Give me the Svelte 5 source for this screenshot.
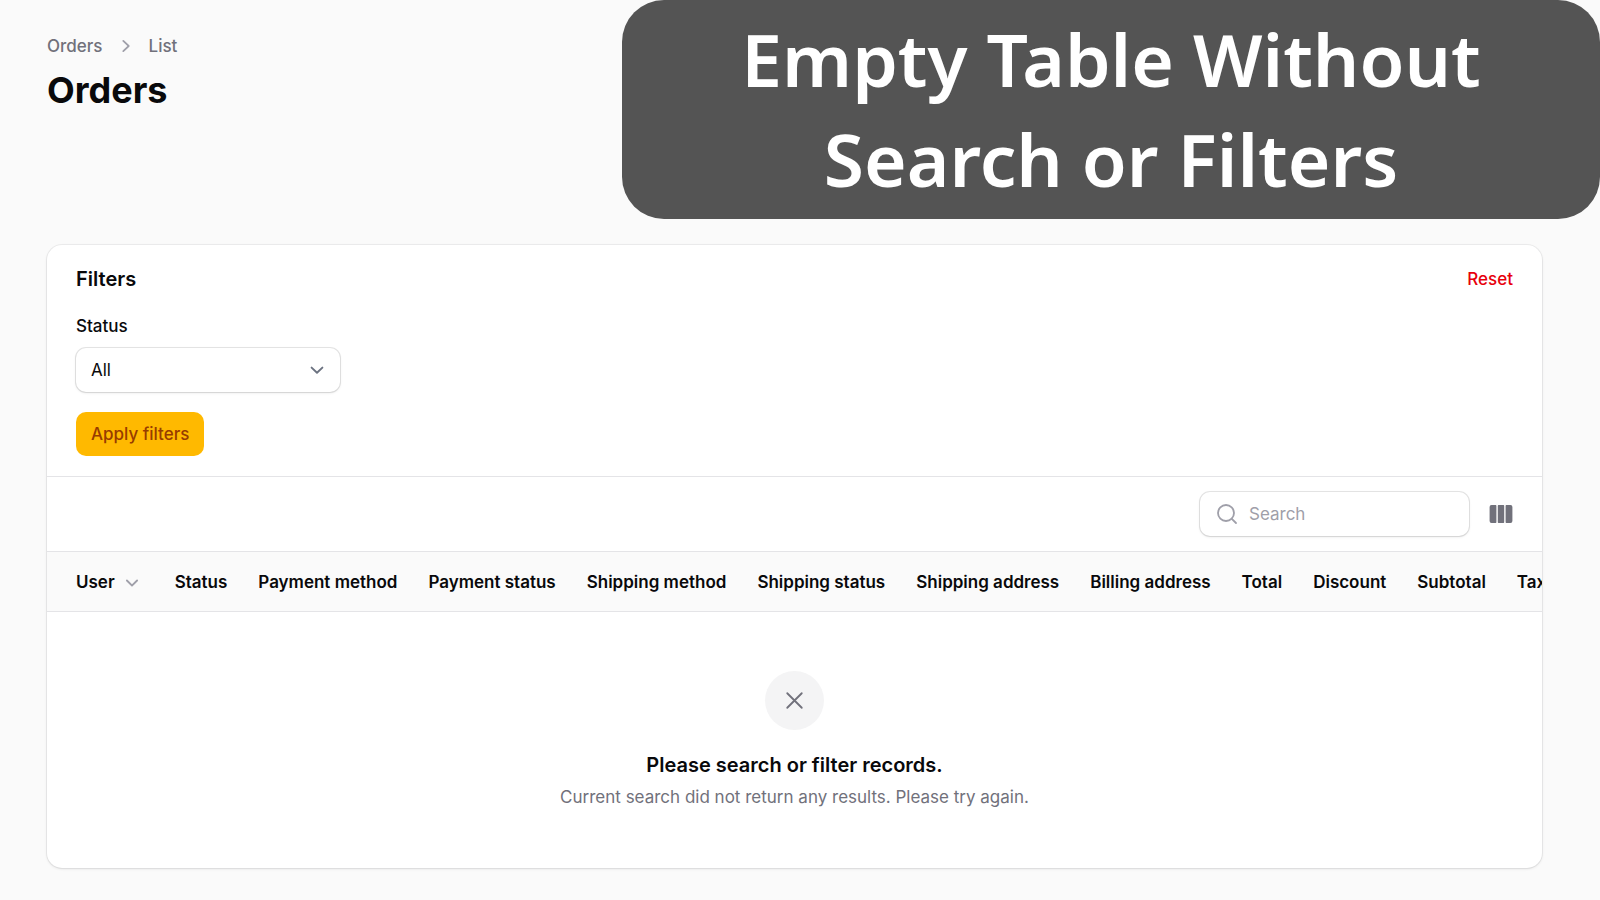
<script>
  let status = 'all';
  let search = '';

  const columns = [
    'User',
    'Status',
    'Payment method',
    'Payment status',
    'Shipping method',
    'Shipping status',
    'Shipping address',
    'Billing address',
    'Total',
    'Discount',
    'Subtotal',
    'Tax',
  ];

  function resetFilters() {
    status = 'all';
  }
</script>

<div class="page">
  <header class="page-header">
    <nav class="breadcrumbs" aria-label="Breadcrumb">
      <a href="#orders">Orders</a>
      <svg viewBox="0 0 20 20" fill="currentColor" aria-hidden="true">
        <path d="M7.21 14.77a.75.75 0 0 1 .02-1.06L11.168 10 7.23 6.29a.75.75 0 1 1 1.04-1.08l4.5 4.25a.75.75 0 0 1 0 1.08l-4.5 4.25a.75.75 0 0 1-1.06-.02Z" />
      </svg>
      <a href="#list">List</a>
    </nav>
    <h1>Orders</h1>
  </header>

  <div class="banner">Empty Table Without Search or Filters</div>

  <main class="card">
    <form class="filters" on:submit|preventDefault>
      <div class="filters-header">
        <h2>Filters</h2>
        <button type="button" class="reset" on:click={resetFilters}>Reset</button>
      </div>
      <div class="field">
        <label for="status">Status</label>
        <div class="select-wrap">
          <select id="status" bind:value={status}>
            <option value="all">All</option>
            <option value="new">New</option>
            <option value="shipped">Shipped</option>
          </select>
          <svg viewBox="0 0 20 20" fill="none" stroke="currentColor" stroke-width="1.6" stroke-linecap="round" stroke-linejoin="round" aria-hidden="true">
            <path d="m5.5 8 4.5 4.3L14.5 8" />
          </svg>
        </div>
      </div>
      <button type="submit" class="apply">Apply filters</button>
    </form>

    <div class="toolbar">
      <label class="search">
        <svg viewBox="0 0 24 24" fill="none" stroke="currentColor" stroke-width="1.8" stroke-linecap="round" aria-hidden="true">
          <circle cx="11" cy="11" r="8" />
          <path d="m16.8 16.8 4.2 4.2" />
        </svg>
        <input type="search" placeholder="Search" aria-label="Search" bind:value={search} />
      </label>
      <button type="button" class="columns" aria-label="Toggle columns">
        <svg viewBox="0 0 24 24" fill="currentColor" aria-hidden="true">
          <path d="M2.5 3h4.2a.7.7 0 0 1 .7.7v16.6a.7.7 0 0 1-.7.7H2.5A1.9 1.9 0 0 1 .6 19.1V4.9A1.9 1.9 0 0 1 2.5 3ZM9.5 3h5a.7.7 0 0 1 .7.7v16.6a.7.7 0 0 1-.7.7h-5a.7.7 0 0 1-.7-.7V3.700a.7.7 0 0 1 .7-.7ZM17.300 3h4.200a1.900 1.900 0 0 1 1.900 1.900v14.200a1.900 1.900 0 0 1-1.900 1.900h-4.200a.7.7 0 0 1-.7-.7V3.700a.7.7 0 0 1 .7-.7Z" />
        </svg>
      </button>
    </div>

    <div class="table-scroll">
      <table>
        <thead>
          <tr>
            {#each columns as column, index}
              <th scope="col">
                {#if index === 0}
                  <button type="button" class="sort">
                    {column}
                    <svg viewBox="0 0 20 20" fill="currentColor" aria-hidden="true">
                      <path d="M5.22 8.22a.75.75 0 0 1 1.06 0L10 11.94l3.72-3.72a.75.75 0 1 1 1.06 1.06l-4.25 4.25a.75.75 0 0 1-1.06 0L5.22 9.28a.75.75 0 0 1 0-1.06Z" />
                    </svg>
                  </button>
                {:else}
                  {column}
                {/if}
              </th>
            {/each}
          </tr>
        </thead>
      </table>
    </div>

    <div class="empty">
      <div class="empty-icon">
        <svg viewBox="0 0 24 24" fill="none" stroke="currentColor" stroke-width="1.5" stroke-linecap="round" stroke-linejoin="round" aria-hidden="true">
          <path d="M6 18 18 6M6 6l12 12" />
        </svg>
      </div>
      <h3>Please search or filter records.</h3>
      <p>Current search did not return any results. Please try again.</p>
    </div>
  </main>
</div>

<style>
  :global(body) {
    background: #fafafa;
  }

  .page {
    box-sizing: border-box;
    position: relative;
    padding: 34px 58px 31px 47px;
    font-family: Inter, 'Liberation Sans', sans-serif;
    font-size: 17px;
    line-height: 24px;
    color: #09090b;
  }

  .page-header {
    height: 211px;
  }

  button,
  input,
  select {
    font: inherit;
    color: inherit;
    margin: 0;
    padding: 0;
    border: none;
    background: none;
  }

  button,
  select {
    cursor: pointer;
  }

  h1,
  h2,
  h3,
  p {
    margin: 0;
  }

  svg {
    display: block;
    flex: none;
    width: 24px;
    height: 24px;
  }

  .breadcrumbs {
    display: flex;
    align-items: center;
    gap: 11px;
    font-weight: 500;
    color: #71717b;
  }

  .breadcrumbs a {
    color: inherit;
    text-decoration: none;
  }

  .breadcrumbs svg {
    color: #9f9fa9;
  }

  h1 {
    margin-top: 10px;
    font-size: 36px;
    line-height: 44px;
    font-weight: 700;
  }

  .banner {
    position: absolute;
    top: 0;
    left: 622px;
    right: 0;
    box-sizing: border-box;
    padding: 9px 100px 10px;
    border-radius: 42px;
    background: #545454;
    color: #fff;
    font-family: 'Noto Sans', sans-serif;
    font-size: 73px;
    line-height: 100px;
    font-weight: 600;
    text-align: center;
  }

  .card {
    border-radius: 15px;
    background: #fff;
    box-shadow: 0 0 0 1px rgba(9, 9, 11, 0.05), 0 1px 3px rgba(0, 0, 0, 0.1);
    overflow: hidden;
  }

  .filters {
    padding: 22px 29px 20px;
    border-bottom: 1px solid #e4e4e7;
  }

  .filters-header {
    display: flex;
    align-items: center;
    justify-content: space-between;
  }

  h2,
  h3 {
    font-size: 20px;
    line-height: 24px;
    font-weight: 600;
  }

  .reset {
    color: #e7000b;
    font-weight: 500;
  }

  .field {
    display: flex;
    flex-direction: column;
    gap: 10px;
    width: 264px;
    margin: 23px 0 20px;
  }

  .field label {
    font-weight: 500;
  }

  .select-wrap {
    position: relative;
  }

  select {
    appearance: none;
    display: block;
    width: 100%;
    height: 44px;
    padding: 0 44px 0 15px;
    border-radius: 10px;
    background: #fff;
    box-shadow: 0 0 0 1px rgba(9, 9, 11, 0.1), 0 1px 3px rgba(0, 0, 0, 0.1);
  }

  .select-wrap svg {
    position: absolute;
    top: 10px;
    right: 11px;
    color: #6b7280;
    pointer-events: none;
  }

  .apply {
    height: 44px;
    padding: 0 15px;
    border-radius: 10px;
    background: #ffb900;
    color: #973c00;
    font-weight: 500;
  }

  .toolbar {
    display: flex;
    align-items: center;
    justify-content: flex-end;
    gap: 20px;
    padding: 15px 29px;
    border-bottom: 1px solid #e4e4e7;
  }

  .search {
    display: flex;
    align-items: center;
    gap: 10px;
    box-sizing: border-box;
    width: 269px;
    height: 44px;
    padding: 0 15px;
    border-radius: 10px;
    box-shadow: 0 0 0 1px rgba(9, 9, 11, 0.1), 0 1px 3px rgba(0, 0, 0, 0.1);
    color: #9f9fa9;
  }

  .search input {
    flex: 1;
    min-width: 0;
    outline: none;
    color: #09090b;
  }

  .search input::placeholder {
    color: #9f9fa9;
    opacity: 1;
  }

  .columns {
    color: #71717b;
  }

  .table-scroll {
    overflow: hidden;
    background: #fafafa;
    border-bottom: 1px solid #e4e4e7;
  }

  table {
    border-collapse: collapse;
    min-width: 100%;
  }

  th {
    height: 59px;
    padding: 0 15px 0 16px;
    font-weight: 600;
    text-align: left;
    white-space: nowrap;
  }

  th:first-child {
    padding-left: 29px;
  }

  .sort {
    display: flex;
    align-items: center;
    gap: 5px;
  }

  .sort svg {
    color: #9f9fa9;
  }

  .empty {
    display: flex;
    flex-direction: column;
    align-items: center;
    padding: 59px 30px;
    text-align: center;
  }

  .empty-icon {
    display: grid;
    place-items: center;
    width: 59px;
    height: 59px;
    margin-bottom: 23px;
    border-radius: 50%;
    background: #f4f4f5;
    color: #71717b;
  }

  .empty-icon svg {
    width: 29px;
    height: 29px;
  }

  .empty p {
    margin-top: 8px;
    color: #71717b;
  }
</style>
